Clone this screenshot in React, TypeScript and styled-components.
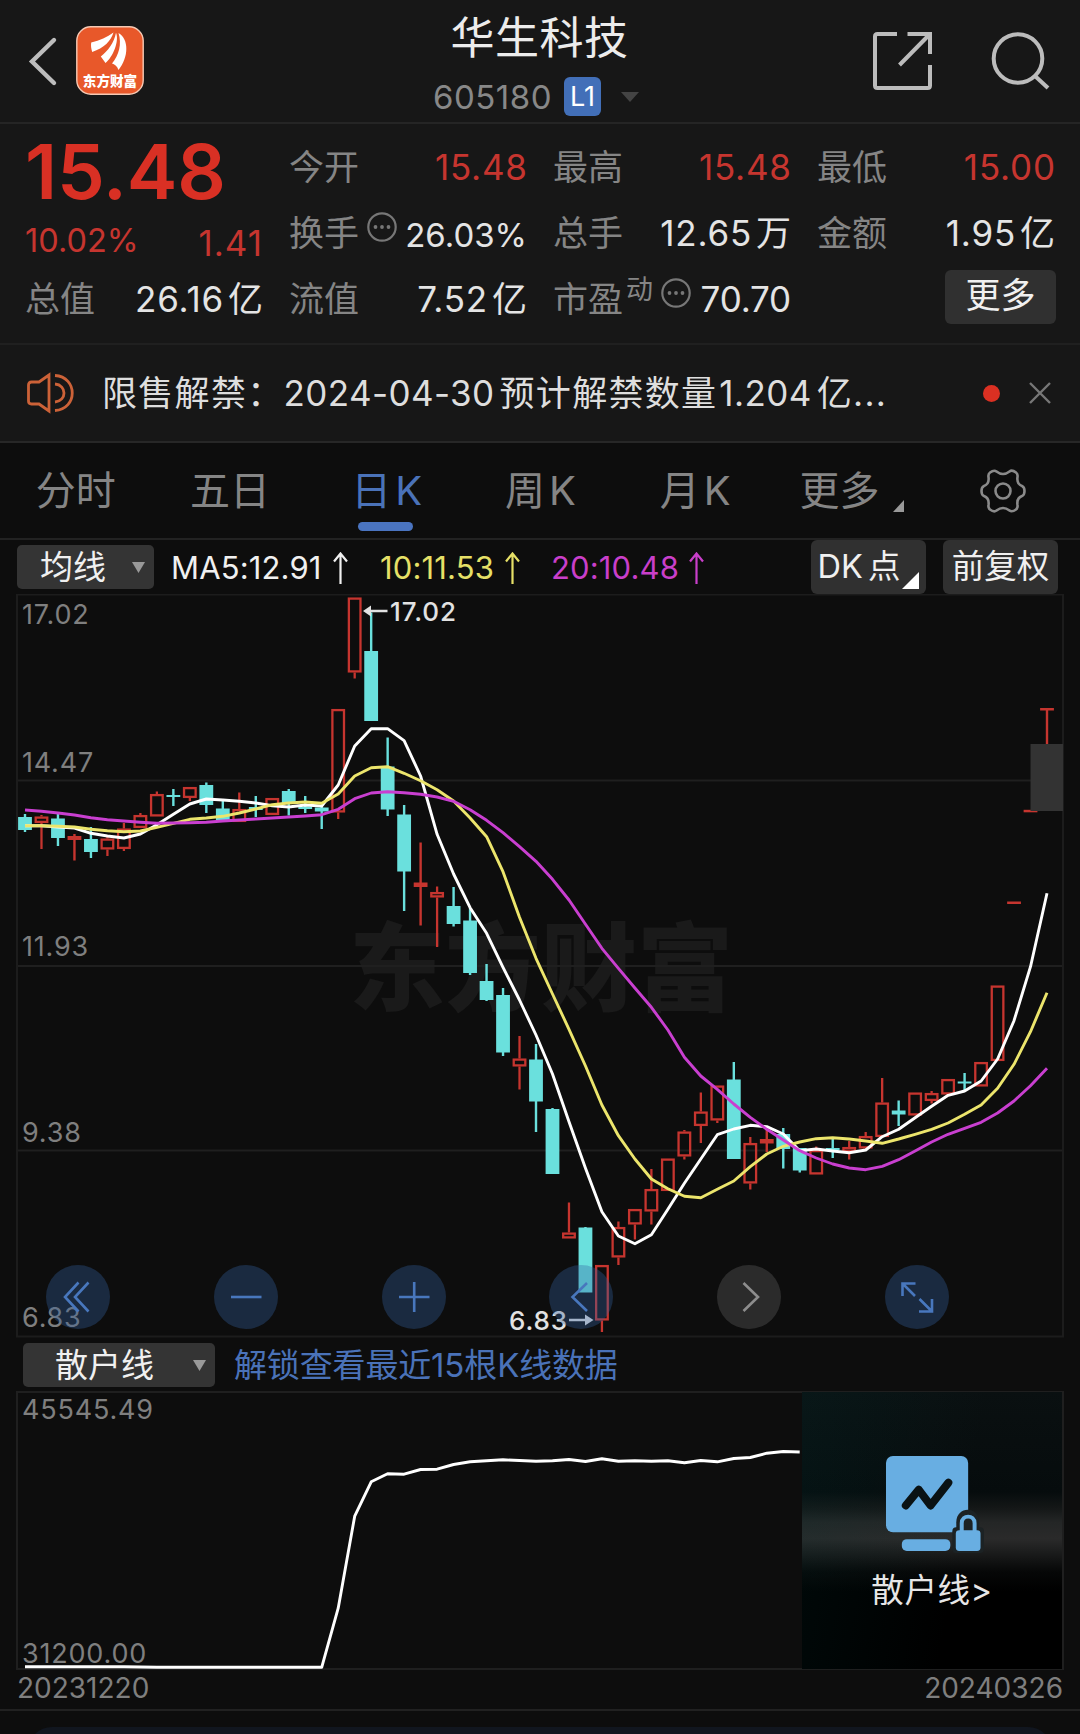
import React from 'react';
import styled, { createGlobalStyle } from 'styled-components';

const GlobalStyle = createGlobalStyle`
  * { box-sizing: border-box; }
  body {
    margin: 0;
    background: #0d0d0d;
    font-family: Inter, "Noto Sans CJK SC", sans-serif;
    color: #e4e4e4;
  }
`;

const RED = '#c6352f';
const CYAN = '#6ae0dd';
const BLUE = '#4a72b8';

const Page = styled.div`
  width: 1080px;
  height: 1734px;
  overflow: hidden;
  display: flex;
  flex-direction: column;
  background: #0d0d0d;
  white-space: nowrap;
`;

/* ---------- header ---------- */

const Header = styled.header`
  height: 124px;
  flex: none;
  display: grid;
  grid-template-columns: 360px 1fr 360px;
  background: #171717;
  border-bottom: 2px solid #252525;
`;

const HeaderLeft = styled.div`
  display: flex;
  align-items: flex-start;
  gap: 18px;
  padding: 26px 0 0 28px;
`;

const BackIcon = styled.svg`
  width: 30px;
  height: 69px;
`;

const Logo = styled.svg`
  width: 68px;
  height: 69px;
`;

const HeaderCenter = styled.div`
  display: flex;
  flex-direction: column;
  align-items: center;
`;

const StockName = styled.h1`
  margin: 9px 0 0 -1px;
  height: 58px;
  line-height: 58px;
  font-size: 44px;
  letter-spacing: .5px;
  font-weight: 400;
  color: #ececec;
`;

const CodeRow = styled.div`
  display: flex;
  align-items: center;
  height: 39px;
  margin: 10px 0 0 -8px;
`;

const Code = styled.span`
  font-size: 33px;
  letter-spacing: .5px;
  color: #888;
`;

const LevelBadge = styled.span`
  width: 37px;
  height: 39px;
  margin-left: 12px;
  border-radius: 6px;
  background: #426fb8;
  color: #fff;
  font-size: 27px;
  line-height: 39px;
  text-align: center;
`;

const CodeCaret = styled.svg`
  width: 18px;
  height: 10px;
  margin-left: 20px;
`;

const HeaderRight = styled.div`
  display: flex;
  justify-content: flex-end;
  align-items: flex-start;
  gap: 56px;
  padding: 30px 29px 0 0;
`;

const HeaderIcon = styled.svg`
  width: 62px;
  height: 62px;
`;

/* ---------- quote ---------- */

const Quote = styled.section`
  height: 221px;
  flex: none;
  display: grid;
  grid-template-columns: repeat(4, 238px);
  grid-template-rows: repeat(3, 66px);
  column-gap: 26px;
  padding: 10px 25px 0;
  background: #171717;
  border-bottom: 2px solid #202020;
`;

const PriceBlock = styled.div`
  grid-row: span 2;
  display: flex;
  flex-direction: column;
`;

const Price = styled.div`
  height: 76px;
  line-height: 74px;
  font-size: 76px;
  font-weight: 600;
  letter-spacing: -.2px;
  color: #d93024;
`;

const ChangeRow = styled.div`
  display: flex;
  justify-content: space-between;
  margin-top: 11px;
  line-height: 40px;
  color: ${RED};
`;

const ChangePercent = styled.span`
  font-size: 32.5px;
`;

const ChangeAmount = styled.span`
  font-size: 35px;
  line-height: 44px;
  letter-spacing: 1px;
`;

const Cell = styled.div`
  display: flex;
  align-items: center;
  justify-content: space-between;
`;

const Label = styled.span`
  display: flex;
  font-size: 35px;
  line-height: 50px;
  color: #858585;
`;

const Superscript = styled.small`
  font-size: 27px;
  line-height: 32px;
  margin-left: 3px;
`;

const DotsIcon = styled.svg`
  width: 30px;
  height: 30px;
  margin: 4px 0 0 8px;
`;

const Value = styled.span<{ $red?: boolean }>`
  font-size: 35px;
  line-height: 50px;
  letter-spacing: .8px;
  margin-right: -.8px;
  color: ${(p) => (p.$red ? RED : '#e4e4e4')};
`;

const NarrowValue = styled(Value)`
  font-size: 33px;
  letter-spacing: 0;
  margin: 3px 0 0;
`;

const TightValue = styled(Value)`
  letter-spacing: -.2px;
  margin: 0;
`;

const Unit = styled.span`
  margin-left: 4px;
`;

const MoreButton = styled.button`
  justify-self: end;
  align-self: center;
  width: 111px;
  height: 54px;
  margin: 0 -1px 5px 0;
  padding: 0 0 3px;
  border: 0;
  border-radius: 6px;
  background: #303030;
  color: #f0f0f0;
  font: inherit;
  font-size: 35px;
  line-height: 50px;
`;

/* ---------- notice ---------- */

const Notice = styled.section`
  height: 98px;
  flex: none;
  display: flex;
  align-items: center;
  padding: 0 29px 0 26px;
  background: #171717;
  border-bottom: 2px solid #272727;
`;

const Speaker = styled.svg`
  width: 48px;
  height: 42px;
`;

const NoticeText = styled.p`
  flex: 1;
  margin: 0 0 0 28px;
  font-size: 35px;
  letter-spacing: 1.3px;
  line-height: 50px;
  color: #dedede;
`;

const NoticeNumber = styled.span<{ $left?: number }>`
  margin: 0 5px 0 ${(p) => p.$left ?? 0}px;
  letter-spacing: .4px;
`;

const RedDot = styled.i`
  width: 17px;
  height: 17px;
  margin-right: 29px;
  border-radius: 50%;
  background: #db3022;
`;

const CloseIcon = styled.svg`
  width: 22px;
  height: 22px;
`;

/* ---------- period tabs ---------- */

const Tabs = styled.nav`
  height: 97px;
  flex: none;
  display: grid;
  grid-template-columns: repeat(7, 1fr);
  align-items: center;
  justify-items: center;
  border-bottom: 2px solid #222;
`;

const Tab = styled.div<{ $active?: boolean; $shift?: number }>`
  position: relative;
  display: flex;
  align-items: flex-end;
  gap: 4px;
  margin-left: ${(p) => p.$shift ?? 0}px;
  font-size: 40px;
  line-height: 56px;
  color: ${(p) => (p.$active ? BLUE : '#858585')};
  &::after {
    content: '';
    display: ${(p) => (p.$active ? 'block' : 'none')};
    position: absolute;
    left: 50%;
    bottom: -12px;
    width: 55px;
    height: 9px;
    margin-left: -29px;
    border-radius: 5px;
    background: #4a74c0;
  }
`;

const TabCorner = styled.svg`
  width: 11px;
  height: 12px;
  margin: 0 0 7px 9px;
`;

const Gear = styled.svg`
  width: 46px;
  height: 46px;
`;

/* ---------- moving averages ---------- */

const MaBar = styled.div`
  height: 54px;
  flex: none;
  display: flex;
  align-items: flex-start;
  padding: 0 22px 0 17px;
`;

const Select = styled.div<{ $w: number; $pad: number; $end: number }>`
  display: flex;
  align-items: center;
  justify-content: space-between;
  width: ${(p) => p.$w}px;
  height: 44px;
  padding: 0 ${(p) => p.$end}px 0 ${(p) => p.$pad}px;
  border-radius: 5px;
  background: #343434;
  color: #f0f0f0;
  font-size: 33px;
  line-height: 44px;
`;

const MaSelect = styled(Select)`
  margin-top: 5px;
`;

const Caret = styled.svg`
  width: 13px;
  height: 11px;
`;

const MaItem = styled.div<{ $c: string; $w: number }>`
  display: flex;
  align-items: center;
  justify-content: space-between;
  width: ${(p) => p.$w}px;
  height: 55px;
  color: ${(p) => p.$c};
  font-size: 31px;
  letter-spacing: .15px;
`;

const MaGap = styled.div<{ $w: number }>`
  width: ${(p) => p.$w}px;
`;

const UpArrow = styled.svg`
  width: 15px;
  height: 32px;
`;

const ChipButton = styled.div`
  display: flex;
  align-items: flex-end;
  justify-content: center;
  width: 115px;
  height: 54px;
  margin-left: auto;
  border-radius: 6px;
  background: #303030;
  color: #f0f0f0;
  font-size: 32.5px;
  line-height: 54px;
  & + & { margin-left: 17px; }
`;

const ChipSuffix = styled.span`
  margin-left: 5px;
`;

const ChipCorner = styled.svg`
  width: 17px;
  height: 17px;
  margin: 0 0 5px 2px;
`;

/* ---------- charts ---------- */

const ChartBox = styled.div<{ $h: number }>`
  position: relative;
  flex: none;
  height: ${(p) => p.$h}px;
`;

const ChartSvg = styled.svg`
  display: block;
  width: 1080px;
  height: 100%;
`;

const ChartTools = styled.div`
  position: absolute;
  left: 46px;
  right: 131px;
  bottom: 9px;
  display: flex;
  justify-content: space-between;
`;

const ToolButton = styled.div<{ $muted?: boolean }>`
  width: 64px;
  height: 64px;
  border-radius: 50%;
  background: ${(p) => (p.$muted ? 'rgba(70,70,70,.55)' : 'rgba(52,98,160,.35)')};
  & > svg {
    display: block;
    width: 64px;
    height: 64px;
    fill: none;
    stroke: ${(p) => (p.$muted ? '#8d8d8d' : '#4877bd')};
    stroke-width: 2.6;
  }
`;

const SubBar = styled.div`
  height: 53px;
  flex: none;
  display: flex;
  align-items: center;
  padding: 1px 0 0 23px;
`;

const UnlockLink = styled.span`
  margin-left: 19px;
  font-size: 33px;
  line-height: 44px;
  letter-spacing: -.15px;
  color: ${BLUE};
`;

const Promo = styled.div`
  position: absolute;
  left: 802px;
  top: 1px;
  width: 260px;
  height: 277px;
  display: flex;
  flex-direction: column;
  align-items: center;
  padding-top: 62px;
  background:
    linear-gradient(100deg, rgba(0, 60, 60, .16), transparent 60%),
    linear-gradient(180deg, #0a1011 0%, #060c0d 36%, #141717 42%, #242626 47%, #2a2a2a 53%, #1b1c1c 58%, #060707 65%, #000 72%, #000 100%);
`;

const PromoIcon = styled.svg`
  width: 99px;
  height: 99px;
  margin-left: 4px;
`;

const PromoText = styled.div`
  margin-top: 15px;
  font-size: 32.5px;
  line-height: 46px;
  letter-spacing: .6px;
  color: #e6e6e6;
`;

const Dates = styled.div`
  height: 41px;
  flex: none;
  display: flex;
  justify-content: space-between;
  padding: 0 17px;
  font-size: 28px;
  line-height: 36px;
  color: #7f7f7f;
  border-bottom: 2px solid #212121;
`;

const BottomPanel = styled.div`
  flex: none;
  height: 40px;
  margin: 16px 28px 0;
  border-radius: 24px 24px 0 0;
  background: #11161f;
`;

/* ---------- data ---------- */

const STEP = 16.484;
const px = (i: number) => 25 + i * STEP;

type Candle = [kind: 'r' | 'c', top: number, bottom: number, high: number, low: number];

const candles: Candle[] = [
  ['c', 817, 830, 814, 832], ['r', 816.5, 823, 815, 849], ['c', 818.5, 838, 814, 846],
  ['r', 836, 840, 834, 860.5], ['c', 839, 852, 827, 858], ['r', 838.5, 849.5, 836.5, 856],
  ['r', 828.5, 849, 823, 851], ['r', 815, 828, 813, 828], ['r', 794, 816.5, 791.5, 816],
  ['c', 795, 797, 789, 806], ['r', 787, 798, 787, 801], ['c', 785, 805, 782.5, 813],
  ['c', 808.5, 820, 801, 820], ['r', 809, 822, 792.5, 822], ['c', 807, 810, 796, 817],
  ['r', 798, 815, 798, 815], ['c', 791, 804, 789, 815.5], ['c', 806.5, 809, 796, 813],
  ['c', 807.5, 811.5, 807, 829], ['r', 709, 812.5, 709, 819], ['r', 597.5, 672.5, 597.5, 678.5],
  ['c', 651, 721, 612.5, 721], ['c', 766.5, 809.5, 737.5, 816], ['c', 814.5, 871.5, 805, 911],
  ['r', 882.5, 887, 842.5, 925.5], ['r', 892, 897.5, 886.5, 947], ['c', 906, 924, 887, 926.5],
  ['c', 920.5, 973, 908, 975], ['c', 981, 1000, 964, 1001], ['c', 995, 1052.5, 988, 1056],
  ['r', 1058.5, 1066.5, 1036, 1089.5], ['c', 1059.5, 1101.5, 1044, 1132], ['c', 1109, 1174, 1108, 1174],
  ['r', 1232.5, 1238.5, 1202.5, 1238], ['c', 1227.5, 1292.5, 1227, 1292], ['r', 1265, 1320.5, 1265, 1332],
  ['r', 1227, 1257.5, 1221.5, 1265], ['r', 1209, 1224.5, 1209, 1239.5], ['r', 1189, 1211.5, 1169, 1224.5],
  ['r', 1158.5, 1191, 1158.5, 1191], ['r', 1131.5, 1156.5, 1130, 1159.5], ['r', 1111.5, 1126, 1092.5, 1143],
  ['r', 1085.5, 1120.5, 1085.5, 1123], ['c', 1079.5, 1159, 1062, 1159], ['r', 1143, 1183.5, 1137, 1189.5],
  ['r', 1139, 1143.5, 1130, 1152], ['c', 1134, 1149, 1128, 1168.5], ['c', 1148, 1170.5, 1148, 1172.5],
  ['r', 1150, 1174.5, 1146.5, 1174], ['c', 1148, 1150, 1137, 1158], ['r', 1147, 1152, 1141, 1159.5],
  ['r', 1136, 1148.5, 1132, 1148], ['r', 1102.5, 1137, 1078, 1137], ['c', 1110.5, 1114.5, 1100.5, 1126],
  ['r', 1092.5, 1115.5, 1092.5, 1115.5], ['r', 1093, 1101, 1091, 1103.5], ['r', 1079, 1094.5, 1079, 1094],
  ['c', 1081.5, 1083.5, 1073, 1090], ['r', 1062, 1086.5, 1062, 1086], ['r', 985.5, 1061, 985.5, 1061],
  ['r', 901.5, 904, 902, 903], ['r', 809.8, 812.3, 810, 811], ['r', 708, 710.5, 709, 744],
];

const ma5 = [825.7, 825.7, 827, 828, 833.3, 836, 838, 834, 824.7, 814.3, 804, 799, 800, 801.3, 803, 805.7, 807, 805, 806, 785, 746, 728.7, 728.7, 740.7, 776, 834.3, 874, 907.7, 933.3, 967.3, 1000, 1035, 1074, 1121.7, 1168.3, 1211.7, 1236, 1243.7, 1234.7, 1209.3, 1183.3, 1159, 1134.7, 1129, 1125.3, 1126.7, 1134, 1150.7, 1149, 1151, 1152.7, 1150, 1136.7, 1129.3, 1117.7, 1106.3, 1095.3, 1091, 1081, 1059, 1020.7, 966.7, 893.3];
const ma10 = [825.7, 825.7, 826.3, 827, 829.3, 830.7, 831.7, 831, 827.3, 823.3, 819.3, 818, 816.3, 813, 809, 804.7, 803, 802, 803.3, 794, 776, 767.7, 766.7, 773.3, 780.7, 789.7, 801, 818, 836.7, 871.7, 917.3, 958.3, 994, 1029.3, 1066, 1105, 1135.7, 1159, 1179, 1188.7, 1196.3, 1197.7, 1189.3, 1181, 1166.7, 1154, 1146.3, 1142, 1138.7, 1137.7, 1139, 1141, 1143.3, 1139, 1134.3, 1129.3, 1123, 1114.3, 1105, 1088.3, 1064.3, 1031.7, 992.7];
const ma20 = [810, 811.3, 813, 815, 817.7, 819.7, 821, 822.3, 823.3, 823, 822.7, 822.3, 821, 820, 819, 818, 817, 816, 814.7, 809.3, 798.7, 793, 791.7, 792.7, 794.3, 797, 801.3, 809.7, 820.3, 832.7, 846.7, 861.3, 879.3, 900, 924.3, 948.3, 968.3, 988, 1007.3, 1030, 1057.3, 1076, 1089.3, 1104, 1117.3, 1129.3, 1140, 1150.7, 1158, 1164, 1168, 1169.7, 1166.3, 1159.7, 1151, 1142, 1134.3, 1128.3, 1122.3, 1113, 1101, 1085.7, 1068.3];
const retail = [...Array(6).fill(1666.2), 1666.2, 1666.5, ...Array(11).fill(1666.8), 1607.7, 1515.7, 1481.3, 1473.3, 1473.7, 1469, 1468.7, 1464, 1461.3, 1460.3, 1459.3, 1460, 1460.7, 1460.3, 1459, 1461, 1458.3, 1460.7, 1460.3, 1460.7, 1460.3, 1462.3, 1460, 1461.3, 1458, 1457, 1452.7, 1451, 1451.5];

const toPoints = (ys: number[]) => ys.map((y, i) => `${px(i).toFixed(1)},${y}`).join(' ');

const CandleMark = ({ x, c }: { x: number; c: Candle }) => {
  const [kind, top, bottom, high, low] = c;
  const color = kind === 'r' ? RED : CYAN;
  const thin = bottom - top < 4.8;
  if (kind === 'c' || thin) {
    return (
      <g fill={color}>
        <rect x={x - 1.2} y={high} width={2.4} height={low - high} />
        <rect x={x - 6.9} y={top} width={13.8} height={bottom - top} />
      </g>
    );
  }
  return (
    <g fill="none" stroke={color} strokeWidth={2.3}>
      {high < top && <path d={`M${x} ${high}V${top}`} />}
      {low > bottom && <path d={`M${x} ${bottom}V${low}`} />}
      <rect x={x - 5.8} y={top + 1.1} width={11.6} height={bottom - top - 2.2} />
    </g>
  );
};

const AxisText = ({ y, children }: { y: number; children: string }) => (
  <text x={22} y={y} dominantBaseline="central" fontSize={27} letterSpacing={0.8} fill="#7f7f7f">
    {children}
  </text>
);

const Dots = () => (
  <DotsIcon viewBox="0 0 30 30">
    <circle cx="15" cy="15" r="13.7" fill="none" stroke="#777" strokeWidth="2.2" />
    <g fill="#777">
      <circle cx="8.5" cy="15" r="1.9" />
      <circle cx="15" cy="15" r="1.9" />
      <circle cx="21.5" cy="15" r="1.9" />
    </g>
  </DotsIcon>
);

const DownCaret = () => (
  <Caret viewBox="0 0 13 11">
    <path d="M0 0H13L6.5 11Z" fill="#999" />
  </Caret>
);

const Up = () => (
  <UpArrow viewBox="0 0 15 32" fill="none" stroke="currentColor" strokeWidth="2.2">
    <path d="M7.5 32V2M1 9.5L7.5 1.5L14 9.5" />
  </UpArrow>
);

export default function App() {
  return (
    <Page>
      <GlobalStyle />

      <Header>
        <HeaderLeft>
          <BackIcon viewBox="0 0 30 69">
            <path d="M26 14L4 35.5L26 57" fill="none" stroke="#bdbdbd" strokeWidth="4.4" strokeLinecap="round" />
          </BackIcon>
          <Logo viewBox="0 0 68 69">
            <rect x=".8" y=".8" width="66.4" height="67.4" rx="14" fill="#e8582a" stroke="#f6c9b4" strokeWidth="1.4" />
            <g fill="#fff">
              <path d="M15.2 16.5C24 14.500 31 11 37.500 6.500C35 15 28 22 16.200 26C15 22 14.800 19.500 15.200 16.500Z" />
              <path d="M40 6.800C43.500 15 37 31 29.500 37L24.800 30.500C32 25 38 17 40 6.800Z" />
              <path d="M42.500 7C53 13 53 31 42.500 44C41 40 38.500 38 36 37.500C43 29 46 18 42.500 7Z" />
            </g>
            <text x="34" y="60" textAnchor="middle" fontSize="13.6" fontWeight="900" fill="#fff">东方财富</text>
          </Logo>
        </HeaderLeft>
        <HeaderCenter>
          <StockName>华生科技</StockName>
          <CodeRow>
            <Code>605180</Code>
            <LevelBadge>L1</LevelBadge>
            <CodeCaret viewBox="0 0 18 10">
              <path d="M0 0H18L9 10Z" fill="#444" />
            </CodeCaret>
          </CodeRow>
        </HeaderCenter>
        <HeaderRight>
          <HeaderIcon viewBox="0 0 62 62" fill="none" stroke="#bcbcbc" strokeWidth="4">
            <path d="M26 4H6.500Q4 4 4 6.500V55.500Q4 58 6.500 58H56.500Q59 58 59 55.500V35M36.500 4H59V24M58 5L28.500 35" />
          </HeaderIcon>
          <HeaderIcon viewBox="0 0 62 62" fill="none" stroke="#bcbcbc" strokeWidth="4">
            <circle cx="29" cy="28.500" r="24.300" />
            <path d="M46 46L59 58" />
          </HeaderIcon>
        </HeaderRight>
      </Header>

      <Quote>
        <PriceBlock>
          <Price>15.48</Price>
          <ChangeRow>
            <ChangePercent>10.02%</ChangePercent>
            <ChangeAmount>1.41</ChangeAmount>
          </ChangeRow>
        </PriceBlock>
        <Cell><Label>今开</Label><Value $red>15.48</Value></Cell>
        <Cell><Label>最高</Label><Value $red>15.48</Value></Cell>
        <Cell><Label>最低</Label><Value $red>15.00</Value></Cell>
        <Cell><Label>换手<Dots /></Label><NarrowValue>26.03%</NarrowValue></Cell>
        <Cell><Label>总手</Label><Value>12.65<Unit>万</Unit></Value></Cell>
        <Cell><Label>金额</Label><Value>1.95<Unit>亿</Unit></Value></Cell>
        <Cell><Label>总值</Label><Value>26.16<Unit>亿</Unit></Value></Cell>
        <Cell><Label>流值</Label><Value>7.52<Unit>亿</Unit></Value></Cell>
        <Cell><Label>市盈<Superscript>动</Superscript><Dots /></Label><TightValue>70.70</TightValue></Cell>
        <MoreButton>更多</MoreButton>
      </Quote>

      <Notice>
        <Speaker viewBox="0 0 48 42" fill="none" stroke="#cc6238" strokeWidth="2.800">
          <path d="M23 3L13 10H5.500Q2.500 10 2.500 13V29Q2.500 32 5.500 32H13L23 39Z" />
          <path d="M29 3.500C52 5 52 37 29 38.500M29 12C41 13 41 29 29 30" />
        </Speaker>
        <NoticeText>
          限售解禁：<NoticeNumber>2024-04-30</NoticeNumber>预计解禁数量<NoticeNumber $left={2}>1.204</NoticeNumber>亿...
        </NoticeText>
        <RedDot />
        <CloseIcon viewBox="0 0 22 22">
          <path d="M1 1L21 21M21 1L1 21" stroke="#777" strokeWidth="2.400" />
        </CloseIcon>
      </Notice>

      <Tabs>
        <Tab $shift={-3}>分时</Tab>
        <Tab $shift={-3}>五日</Tab>
        <Tab $active $shift={2}><span>日</span><span>K</span></Tab>
        <Tab $shift={1}><span>周</span><span>K</span></Tab>
        <Tab $shift={2}><span>月</span><span>K</span></Tab>
        <Tab $shift={6}>
          更多
          <TabCorner viewBox="0 0 11 12"><path d="M11 0V12H0Z" fill="#999" /></TabCorner>
        </Tab>
        <Gear viewBox="-23 -23 46 46" fill="none" stroke="#8a8a8a" strokeWidth="2.600" strokeLinejoin="round">
          <circle r="7.500" />
          <path d="M-13 -18.500Q-9 -21.500 -6.500 -19.500Q0 -14.500 6.500 -19.500Q9 -21.500 13 -18.500Q15 -17 14.500 -14Q13.500 -7 19 -5Q21.500 -4 21.500 0Q21.500 4 19 5Q13.500 7 14.500 14Q15 17 13 18.500Q9 21.500 6.500 19.500Q0 14.500 -6.500 19.500Q-9 21.500 -13 18.500Q-15 17 -14.500 14Q-13.500 7 -19 5Q-21.500 4 -21.500 0Q-21.500 -4 -19 -5Q-13.500 -7 -14.500 -14Q-15 -17 -13 -18.500Z" />
        </Gear>
      </Tabs>

      <MaBar>
        <MaSelect $w={137} $pad={23} $end={9}>均线<DownCaret /></MaSelect>
        <MaGap $w={17} />
        <MaItem $c="#f0f0f0" $w={177}><span>MA5:12.91</span><Up /></MaItem>
        <MaGap $w={32} />
        <MaItem $c="#e6e067" $w={140}><span>10:11.53</span><Up /></MaItem>
        <MaGap $w={31} />
        <MaItem $c="#c93fca" $w={153}><span>20:10.48</span><Up /></MaItem>
        <ChipButton>
          DK<ChipSuffix>点</ChipSuffix>
          <ChipCorner viewBox="0 0 17 17"><path d="M17 0V17H0Z" fill="#fff" /></ChipCorner>
        </ChipButton>
        <ChipButton>前复权</ChipButton>
      </MaBar>

      <ChartBox $h={744}>
        <ChartSvg viewBox="0 594 1080 744">
          <text x="541" y="1003" textAnchor="middle" fontSize="96" fontWeight="900" fill="#1a1a1a">东方财富</text>
          <g stroke="#1f1f1f" strokeWidth="2">
            <path d="M17 780.500H1063M17 966H1063M17 1150.500H1063" />
            <rect x="17" y="594.500" width="1046" height="742" fill="none" stroke="#1c1c1c" />
          </g>
          <AxisText y={614}>17.02</AxisText>
          <AxisText y={762}>14.47</AxisText>
          <AxisText y={946}>11.93</AxisText>
          <AxisText y={1132}>9.38</AxisText>
          <AxisText y={1317}>6.83</AxisText>
          {candles.map((c, i) => <CandleMark key={i} x={px(i)} c={c} />)}
          <rect x="1030.500" y="744" width="32.500" height="67" fill="#333" />
          <g fill="none" strokeWidth="2.900" strokeLinejoin="round">
            <polyline points={toPoints(ma5)} stroke="#fff" />
            <polyline points={toPoints(ma10)} stroke="#ece56c" />
            <polyline points={toPoints(ma20)} stroke="#c93fd0" />
          </g>
          <g fill="#e2e2e2" fontSize="26" fontWeight="500" letterSpacing=".9">
            <path d="M363 611L371 605.500V609.700H387.500V612.300H371V616.500Z" />
            <text x="390" y="611.500" dominantBaseline="central">17.02</text>
            <path d="M593.500 1320L585 1314.500V1318.700H569V1321.300H585V1325.500Z" />
            <text x="509" y="1320.500" dominantBaseline="central">6.83</text>
          </g>
        </ChartSvg>
        <ChartTools>
          <ToolButton><svg viewBox="0 0 64 64"><path d="M32.500 17.500L19 32L32.500 46.500M42.500 17.500L29 32L42.500 46.500" /></svg></ToolButton>
          <ToolButton><svg viewBox="0 0 64 64"><path d="M17 32H47.500" /></svg></ToolButton>
          <ToolButton><svg viewBox="0 0 64 64"><path d="M17 32H47.500M32.200 17V47" /></svg></ToolButton>
          <ToolButton><svg viewBox="0 0 64 64"><path d="M38 18L23.500 32L38 46" /></svg></ToolButton>
          <ToolButton $muted><svg viewBox="0 0 64 64"><path d="M26.500 18L41 32L26.500 46" /></svg></ToolButton>
          <ToolButton><svg viewBox="0 0 64 64"><path d="M17.500 31V18.500H30.500M18 19L30 31M47 34V46.500H34M46.500 46L34.500 34" /></svg></ToolButton>
        </ChartTools>
      </ChartBox>

      <SubBar>
        <Select $w={192} $pad={32} $end={9}>散户线<DownCaret /></Select>
        <UnlockLink>解锁查看最近15根K线数据</UnlockLink>
      </SubBar>

      <ChartBox $h={279}>
        <ChartSvg viewBox="0 1390.500 1080 279">
          <rect x="17" y="1391.500" width="1046" height="277" fill="none" stroke="#1f1f1f" strokeWidth="2" />
          <AxisText y={1409}>45545.49</AxisText>
          <AxisText y={1653}>31200.00</AxisText>
          <polyline points={toPoints(retail)} fill="none" stroke="#fff" strokeWidth="2.900" strokeLinejoin="round" />
        </ChartSvg>
        <Promo>
          <PromoIcon viewBox="0 0 100 100">
            <rect x="1" y="2" width="83" height="77" rx="7" fill="#68aee2" />
            <path d="M21 52L34 36L46 52L64 29" fill="none" stroke="#0a1214" strokeWidth="8" strokeLinecap="round" strokeLinejoin="round" />
            <path d="M72 80V69C72 52 95 52 95 69V80" fill="#1c2224" />
            <rect x="68" y="74" width="32" height="26" rx="4" fill="#1c2224" />
            <path d="M77.500 79V70C77.500 61 90.500 61 90.500 70V79" fill="none" stroke="#68aee2" strokeWidth="4" />
            <rect x="17" y="86" width="49" height="12" rx="5" fill="#68aee2" />
            <rect x="71.500" y="77" width="25" height="21" rx="3.500" fill="#68aee2" />
          </PromoIcon>
          <PromoText>散户线&gt;</PromoText>
        </Promo>
      </ChartBox>

      <Dates>
        <span>20231220</span>
        <span>20240326</span>
      </Dates>
      <BottomPanel />
    </Page>
  );
}
